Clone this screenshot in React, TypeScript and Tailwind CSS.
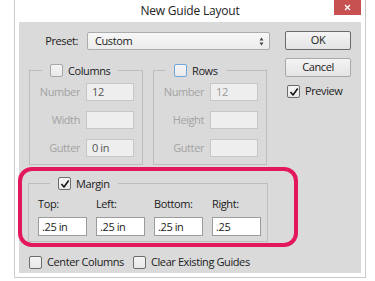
import type { ReactNode } from 'react'

const CheckBox = ({ checked = false, tone = 'normal' }: { checked?: boolean; tone?: 'normal' | 'soft' | 'focus' }) => {
  const border =
    tone === 'focus' ? 'border-[#6fa7dc]' : tone === 'soft' ? 'border-[#a8a8a8]' : 'border-[#6c6c6c]'
  return (
    <span
      className={`w-[13px] h-[13px] shrink-0 rounded-[2px] border ${border} bg-gradient-to-b from-[#f4f4f4] to-[#e9e9e9] flex items-center justify-center`}
    >
      {checked && (
        <svg width="10" height="10" viewBox="0 0 10 10" fill="none">
          <path d="M1.5 5 L4 8 L8.7 1.5" stroke="#111" strokeWidth="1.5" strokeLinejoin="round" />
        </svg>
      )}
    </span>
  )
}

const Field = ({ label, value, dim }: { label: string; value?: string; dim?: boolean }) => (
  <div className="flex items-center h-[18px] gap-[6px]">
    <span className="w-[50px] text-right text-[#a3a3a3]">{label}</span>
    <span
      className={`w-[48px] h-[18px] border border-[#c6c6c6] bg-[#eeeeee] pl-[5px] leading-[16px] ${dim ? 'text-[#9a9a9a]' : 'text-[#555]'}`}
    >
      {value}
    </span>
  </div>
)

const Group = ({ title, box, children }: { title: string; box: ReactNode; children: ReactNode }) => (
  <fieldset className="border border-[#bdbdbd] w-[114px] pt-[5px] pb-[7px] flex flex-col gap-[10px]">
    <legend className="ml-[12px] px-[8px]">
      <span className="flex items-center gap-[5px] leading-[15px]">
        {box}
        <span>{title}</span>
      </span>
    </legend>
    {children}
  </fieldset>
)

const Button = ({ label, primary }: { label: string; primary?: boolean }) => (
  <div
    className={`w-[66px] h-[19px] rounded-[2px] border ${primary ? 'border-[#6b6b6b]' : 'border-[#a9a9a9]'} bg-gradient-to-b from-[#f4f4f4] to-[#e4e4e4] flex items-center justify-center`}
  >
    {label}
  </div>
)

const App = () => {
  const margins = [
    { label: 'Top:', value: '.25 in' },
    { label: 'Left:', value: '.25 in' },
    { label: 'Bottom:', value: '.25 in' },
    { label: 'Right:', value: '.25' },
  ]

  return (
    <div className="relative w-[375px] h-[281px] overflow-hidden bg-white text-[11px] tracking-[-0.4px] text-[#1b1b1b] font-['Open_Sans','Noto_Sans',sans-serif]">
      <div className="ml-[14px] w-[352px] h-[278px] border-x border-b border-[#cacaca] px-[4px] pb-[4px] flex flex-col">
        {/* title bar */}
        <div className="h-[22px] flex">
          <div className="w-[27px]" />
          <div className="flex-1 text-center text-[12px] tracking-[-0.2px] leading-[22px] text-[#222]">New Guide Layout</div>
          <div className="w-[27px] h-[15px] bg-[#c75050] flex items-center justify-center">
            <svg width="7" height="7" viewBox="0 0 7 7">
              <path d="M1 1 L6 6 M6 1 L1 6" stroke="#fff" strokeWidth="1.3" />
            </svg>
          </div>
        </div>

        <div className="flex-1 bg-[#dadada] flex pt-[9px]">
          <div className="w-[266px] flex flex-col">
            <div className="flex items-center h-[18px] mt-[1px]">
              <span className="w-[68px] text-right pr-[9px]">Preset:</span>
              <div className="w-[183px] h-[18px] rounded-[2px] border border-[#acacac] bg-gradient-to-b from-[#f7f7f7] to-[#ececec] flex items-center justify-between pl-[7px] pr-[5px]">
                <span>Custom</span>
                <svg width="5" height="9" viewBox="0 0 5 9">
                  <path d="M2.5 0.5 L4.5 3.5 L0.5 3.5 Z M2.5 8.5 L4.5 5.5 L0.5 5.5 Z" fill="#444" />
                </svg>
              </div>
            </div>

            <div className="flex gap-[10px] ml-[10px] mt-[13px]">
              <Group title="Columns" box={<CheckBox tone="soft" />}>
                <Field label="Number" value="12" />
                <Field label="Width" />
                <Field label="Gutter" value="0 in" />
              </Group>
              <Group title="Rows" box={<CheckBox tone="focus" />}>
                <Field label="Number" value="12" dim />
                <Field label="Height" />
                <Field label="Gutter" />
              </Group>
            </div>

            <fieldset className="ml-[9px] mt-[11px] w-[240px] border border-[#bdbdbd] pt-[5px] pb-[5px] pl-[9px]">
              <legend className="ml-[12px] px-[8px]">
                <span className="flex items-center gap-[5px] leading-[15px]">
                  <CheckBox checked />
                  <span>Margin</span>
                </span>
              </legend>
              <div className="grid grid-cols-[49px_49px_49px_49px] gap-x-[9px] gap-y-[6px]">
                {margins.map((m) => (
                  <span key={m.label} className="leading-[15px]">
                    {m.label}
                  </span>
                ))}
                {margins.map((m) => (
                  <span
                    key={m.label + 'v'}
                    className="h-[19px] border border-[#9c9c9c] bg-white pl-[3px] leading-[17px]"
                  >
                    {m.value}
                  </span>
                ))}
              </div>
            </fieldset>

            <div className="ml-[10px] mt-[12px] flex items-center">
              <CheckBox />
              <span className="ml-[5px]">Center Columns</span>
              <span className="ml-[9px]">
                <CheckBox />
              </span>
              <span className="ml-[5px]">Clear Existing Guides</span>
            </div>
          </div>

          <div className="w-[66px] flex flex-col gap-[8px]">
            <Button label="OK" primary />
            <Button label="Cancel" />
            <div className="flex items-center gap-[5px] pl-[2px] h-[13px]">
              <CheckBox checked />
              <span>Preview</span>
            </div>
          </div>
        </div>
      </div>

      {/* pink highlight drawn over the margin group */}
      <div className="absolute left-[18px] top-[167px] w-[280px] h-[80px] rounded-[14px] border-[4px] border-[#e3175b] pointer-events-none" />
    </div>
  )
}

export default App
